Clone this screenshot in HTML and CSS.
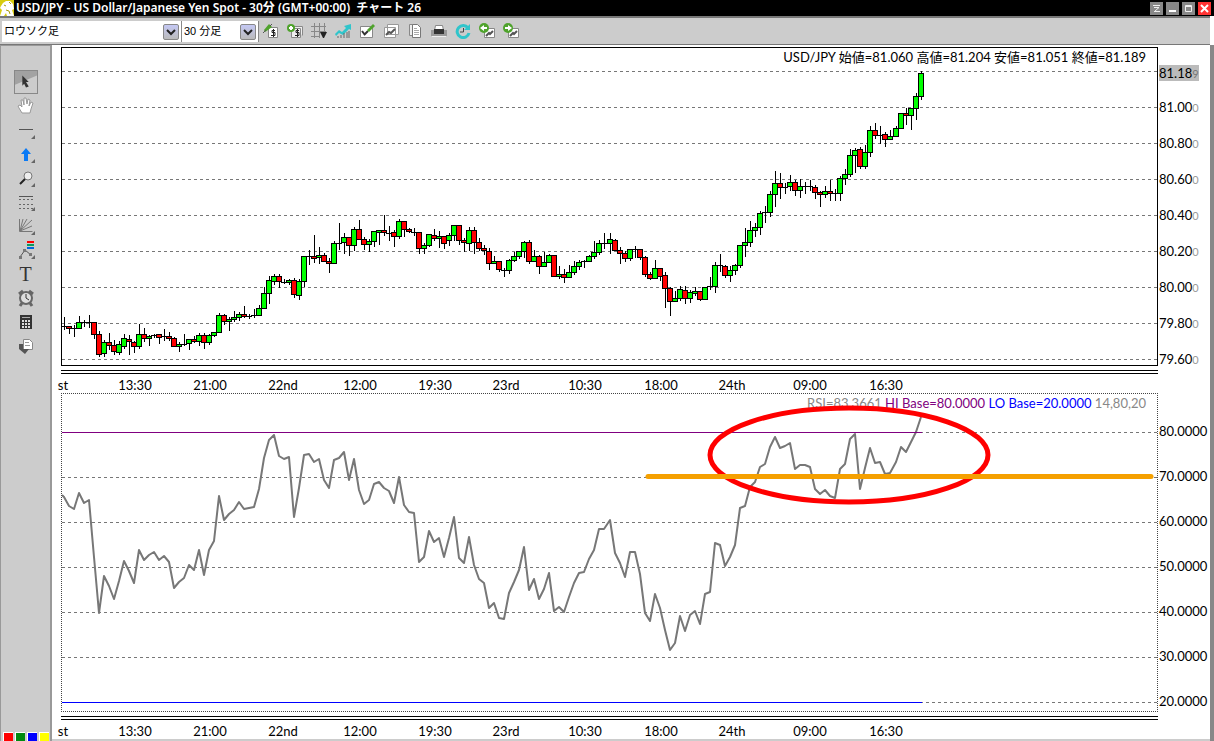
FILE: index.html
```
<!DOCTYPE html>
<html lang="ja">

<head>
    <meta charset="UTF-8">
    <meta name="viewport" content="width=device-width, initial-scale=1.0">
    <title>USD/JPY - US Dollar/Japanese Yen Spot</title>
    <link rel="stylesheet" href="styles.css">
</head>

<body>
    <header class="title-bar">
        <svg class="app-icon" width="14" height="16" viewBox="0 0 14 16">
            <path fill="#d8cc10" d="M0 0h14v16H0z"/>
            <path fill="#fff" d="M1 6l2-3 3-2 4 0 3 3 1 5-2 1 2 6H7l-1-3-2 3H0l2-6-2-2z"/>
            <path stroke="#a89c10" fill="none" d="M4 5l2 1M6 10l3 1 1 3M9 2l2 2"/>
        </svg>
        <h1>USD/JPY - US Dollar/Japanese Yen Spot - 30分 (GMT+00:00)&nbsp; チャート 26</h1>
        <div class="window-controls">
            <button aria-label="ピン"><svg width="13" height="13"><path d="M3 3.500h7M4 9.500h6M4 5.500h5L5 9" stroke="#eee" fill="none"/></svg></button>
            <button aria-label="最小化"><svg width="13" height="13"><path d="M3 8h7v2H3z" fill="#fff"/></svg></button>
            <button aria-label="最大化"><svg width="13" height="13"><path d="M3.500 3.500h6v6h-6zM3 4.500h7" stroke="#eee" fill="none"/></svg></button>
            <button class="close" aria-label="閉じる"><svg width="13" height="13"><path d="M3 3l7 7M10 3l-7 7" stroke="#fff" stroke-width="2"/></svg></button>
        </div>
    </header>

    <div class="toolbar">
        <span class="picker picker-type">
            <select aria-label="チャートの種類"><option>ロウソク足</option></select>
            <svg width="16" height="16"><path d="M3 5l4 4 4-4" stroke="#222" stroke-width="2" fill="none"/></svg>
        </span>
        <span class="picker picker-period">
            <select aria-label="足の期間"><option>30 分足</option></select>
            <svg width="16" height="16"><path d="M3 5l4 4 4-4" stroke="#222" stroke-width="2" fill="none"/></svg>
        </span>
        <div class="tools">
            <button aria-label="売買"><svg width="16" height="16"><path d="M5.500 4.500h9v10h-9z" fill="#fff" stroke="#888"/><path d="M12 7.500H9v2h3v3H8M10.500 6v8" stroke="#222" fill="none"/><path d="M1 7l5-6 3 3-4 3-3 2z" fill="#4fa32c"/><path d="M0 10l3-3M7 3l2-2" stroke="#555"/></svg></button>
            <button aria-label="注文を追加"><svg width="16" height="16"><path d="M6.500 3.500h9v9M4.500 5.500h9v9h-9z" fill="#eee" stroke="#888"/><path d="M12 7.500H9v2h3v3H8M10.500 6v8" stroke="#222" fill="none"/><circle cx="4" cy="5" r="4" fill="#4fa32c"/><path d="M2 5h4M4 3v4" stroke="#fff" stroke-width="2"/></svg></button>
            <button aria-label="グリッド"><svg width="16" height="16"><path d="M0 3.500h15M0 8.500h15M0 13.500h9M3.500 0v15M8.500 0v15M13.500 0v8" stroke="#888" fill="none"/><path d="M9 9h7l-3 6h-1z" fill="#222"/></svg></button>
            <button aria-label="指標"><svg width="16" height="16"><path d="M0 11l4-4 3 2 4-4-2-2 7-2v6l-2-1-6 6-4-2-3 3z" fill="#30c5cb"/><path d="M3 15v-2M6 15v-3M9 15v-5M12 15V9M14 15V8" stroke="#666"/></svg></button>
            <button aria-label="編集"><svg width="16" height="16"><path d="M1.500 3.500h12v11h-12z" fill="#fff" stroke="#888"/><path d="M3 8l3 4M5 12l4-4" stroke="#333" stroke-width="2"/><path d="M8 7l6-6 2 2-6 6z" fill="#4fa32c"/></svg></button>
            <button aria-label="チャートを複製"><svg width="16" height="16"><path d="M4.500 1.500h11v10h-11zM1.500 4.500h11v10h-11z" fill="#fff" stroke="#999"/><path d="M3 12l3-3 2 1 4-4" stroke="#555" stroke-width="2" fill="none"/></svg></button>
            <button aria-label="コピー"><svg width="16" height="16"><path d="M2.500 1.500h6v11h-6z" fill="#eee" stroke="#888"/><path d="M5.500 1.500h5l3 3v10h-8z" fill="#fff" stroke="#777"/><path d="M7 5.500h3M7 7.500h5M7 9.500h5M7 11.500h5" stroke="#aaa"/></svg></button>
            <button aria-label="印刷"><svg width="16" height="16"><path d="M4.500 2.500h7l1 5h-9z" fill="#fff" stroke="#888"/><path d="M0 7h16v6H0z" fill="#999"/><path d="M3 6h10v5H3z" fill="#333"/><path d="M1 13.500h14" stroke="#eee"/></svg></button>
            <button aria-label="更新"><svg width="16" height="16"><path d="M13 5a6 6 0 1 0 1 5" stroke="#30c5cb" stroke-width="3" fill="none"/><path d="M9 7l6-6v6z" fill="#30c5cb"/><path d="M8.500 5v4H5" stroke="#444" fill="none"/></svg></button>
            <button aria-label="戻る"><svg width="16" height="16"><path d="M5.500 5.500h10v9h-10z" fill="#fff" stroke="#888"/><path d="M7 13l3-3 1 1 3-3" stroke="#555" stroke-width="2" fill="none"/><circle cx="5" cy="5" r="5" fill="#4fa32c"/><path d="M1 5l4-3v2h3v2H5v2z" fill="#fff"/></svg></button>
            <button aria-label="進む"><svg width="16" height="16"><path d="M5.500 5.500h10v9h-10z" fill="#fff" stroke="#888"/><path d="M7 13l3-3 1 1 3-3" stroke="#555" stroke-width="2" fill="none"/><circle cx="5" cy="5" r="5" fill="#4fa32c"/><path d="M9 5L5 2v2H2v2h3v2z" fill="#fff"/></svg></button>
        </div>
    </div>

    <div class="workspace">
        <nav class="sidebar">
            <button class="tool selected" aria-label="選択"><svg viewBox="0 0 24 24"><path d="M0 0h24v5L0 15z" fill="#a2a2a2"/><path d="M8 5l7 7h-3l3 5-3 1-2-4-2 2z" fill="#333"/></svg></button>
            <button class="tool" aria-label="移動"><svg viewBox="0 0 24 24"><path d="M8 19l-3-5-1-2 2-1 2 2-1-7 2 0 1 5V4l2 0 1 6 1-5 2 1-1 6 2-4 2 1-2 6-1 4z" fill="#fff" stroke="#999"/></svg></button>
            <button class="tool" aria-label="直線"><svg viewBox="0 0 24 24"><path d="M5 11.500h14" stroke="#555"/><path class="more" d="M21 17v4h-4z"/></svg></button>
            <button class="tool" aria-label="矢印"><svg viewBox="0 0 24 24"><path d="M12 6l5 6h-3v7h-4v-7H7z" fill="#0a7af5"/><path class="more" d="M21 17v4h-4z"/></svg></button>
            <button class="tool" aria-label="拡大"><svg viewBox="0 0 24 24"><circle cx="14" cy="10" r="4" fill="#eee" stroke="#777"/><path d="M11 13l-5 5" stroke="#222" stroke-width="2"/><path class="more" d="M21 17v4h-4z"/></svg></button>
            <button class="tool" aria-label="リトレースメント"><svg viewBox="0 0 24 24"><path d="M5 6.500h14" stroke="#555"/><path d="M5 9.500h14M5 14.500h14M5 18.500h14" stroke="#666" stroke-dasharray="2 2"/><path class="more" d="M21 17v4h-4z"/></svg></button>
            <button class="tool" aria-label="ファン"><svg viewBox="0 0 24 24"><path d="M5.500 5v12.500h13M6 17L9 5M6 17l7-12M6 17L18 6M6 17l12-5" stroke="#777" fill="none"/><path class="more" d="M21 17v4h-4z"/></svg></button>
            <button class="tool" aria-label="波動"><svg viewBox="0 0 24 24"><path d="M6 19l5-7 6 5" stroke="#555" fill="none"/><path d="M5 18h3v3H5zM9 11h3v3H9zM15 15h3v3h-3z" fill="#777"/><path d="M13 4h7" stroke="#f00" stroke-width="2"/><path d="M13 7h7" stroke="#0a9a5a" stroke-width="2"/><path d="M13 10h7" stroke="#06d" stroke-width="2"/><path class="more" d="M21 17v4h-4z"/></svg></button>
            <button class="tool tool-text" aria-label="文字">T</button>
            <button class="tool" aria-label="アラーム"><svg viewBox="0 0 24 24"><path d="M5 8l4-3M19 8l-4-3M8 17l-2 3M16 17l2 3" stroke="#666" stroke-width="3"/><circle cx="12" cy="12" r="6" fill="#ddd" stroke="#666" stroke-width="2"/><path d="M12 8v4l3 2" stroke="#333" fill="none"/></svg></button>
            <button class="tool" aria-label="電卓"><svg viewBox="0 0 24 24"><path d="M6 5h12v14H6z" fill="#333"/><path d="M8 7.500h8" stroke="#aaa"/><path d="M8 11h8M8 14h8M8 17h8" stroke="#ddd" stroke-width="2" stroke-dasharray="2 1"/></svg></button>
            <button class="tool" aria-label="ページ"><svg viewBox="0 0 24 24"><path d="M9.500 5.500h6l3 3v7h-9z" fill="#fff" stroke="#888"/><path d="M11 8.500h4M11 11.500h5" stroke="#999"/><path d="M5 10h4v5h6l-4 5-6-5z" fill="#555"/></svg></button>
            <div class="swatches">
                <button class="swatch red" aria-label="赤"></button>
                <button class="swatch green" aria-label="緑"></button>
                <button class="swatch blue" aria-label="青"></button>
                <button class="swatch yellow" aria-label="黄"></button>
            </div>
        </nav>

        <main class="charts">
            <section class="panel">
                <div class="plot price-plot">
                    <p class="legend">USD/JPY 始値=81.060 高値=81.204 安値=81.051 終値=81.189</p>
                    <svg id="priceSvg"></svg>
                </div>
                <div class="scale price-scale">
                    <p class="current">81.18<small>9</small></p>
                    <ul>
                        <li>81.00<small>0</small></li>
                        <li>80.80<small>0</small></li>
                        <li>80.60<small>0</small></li>
                        <li>80.40<small>0</small></li>
                        <li>80.20<small>0</small></li>
                        <li>80.00<small>0</small></li>
                        <li>79.80<small>0</small></li>
                        <li>79.60<small>0</small></li>
                    </ul>
                </div>
                <svg class="time-axis"></svg>
            </section>
            <section class="panel">
                <div class="plot rsi-plot">
                    <p class="legend"><span class="rsi">RSI=83.3661</span> <span class="hi">HI Base=80.0000</span> <span class="lo">LO Base=20.0000</span> <span class="params">14,80,20</span></p>
                    <svg id="rsiSvg"></svg>
                </div>
                <div class="scale rsi-scale">
                    <ul>
                        <li>80.0000</li>
                        <li>70.0000</li>
                        <li>60.0000</li>
                        <li>50.0000</li>
                        <li>40.0000</li>
                        <li>30.0000</li>
                        <li>20.0000</li>
                    </ul>
                </div>
                <svg class="time-axis"></svg>
            </section>
        </main>
    </div>

    <script src="chart.js"></script>
</body>

</html>
```
FILE: styles.css
```
:root {
    --chrome: #cccccc;
    --edge: #777777;
    --grid: #777777;
    --buy: #00ff00;
    --sell: #ff0000;
}

* {
    box-sizing: border-box;
    margin: 0;
    padding: 0;
}

body {
    font-family: Lato, "Noto Sans CJK JP", sans-serif;
    font-size: 13px;
    color: #000;
    background: #fff;
    display: flex;
    flex-direction: column;
    height: 100vh;
    overflow: hidden;
}

button {
    border: none;
    background: none;
    display: flex;
    align-items: center;
    justify-content: center;
}

svg {
    display: block;
}

ul {
    list-style: none;
}

.title-bar {
    display: flex;
    align-items: center;
    gap: 2px;
    height: 16px;
    padding-right: 3px;
    background: #000;
    color: #fff;
}

.title-bar h1 {
    flex: 1;
    font-family: "Noto Sans", "Noto Sans CJK JP", sans-serif;
    font-size: 12px;
    line-height: 16px;
    font-weight: 600;
    white-space: nowrap;
}

.window-controls {
    display: flex;
    gap: 3px;
}

.window-controls button {
    width: 13px;
    height: 13px;
    background: #888;
}

.window-controls .close {
    background: #f33;
}

.toolbar {
    display: flex;
    align-items: center;
    height: 29px;
    margin-right: 4px;
    padding-left: 2px;
    background: var(--chrome);
    border-top: 2px solid var(--edge);
    border-bottom: 1px solid var(--edge);
}

.picker {
    position: relative;
    height: 21px;
    border-right: 1px solid #888;
}

.picker-type {
    width: 180px;
}

.picker-period {
    width: 77px;
}

.picker select {
    appearance: none;
    width: 100%;
    height: 21px;
    padding: 0 20px 0 2px;
    border: none;
    background: #fff;
    color: #000;
    font-family: "Liberation Sans", "Noto Sans CJK JP", sans-serif;
    font-size: 11px;
}

.picker svg {
    position: absolute;
    top: 3px;
    right: 2px;
    background: linear-gradient(#c4c8f4, #bbb);
    border: 1px solid #888;
    border-radius: 2px;
    pointer-events: none;
}

.tools {
    display: flex;
}

.tools button {
    width: 24px;
    height: 24px;
}

.workspace {
    flex: 1;
    display: flex;
    min-height: 0;
    border-right: 4px solid #888;
}

.sidebar {
    width: 52px;
    padding-top: 24px;
    display: flex;
    flex-direction: column;
    align-items: center;
    background: var(--chrome);
    border-left: 1px solid #999;
    border-right: 2px solid #999;
    border-top: 1px solid #999;
}

.tool {
    width: 24px;
    height: 24px;
    flex: none;
}

.tool svg {
    width: 24px;
    height: 24px;
}

.tool.selected {
    border: 1px solid #888;
}

.tool .more {
    fill: #666;
}

.tool-text {
    font-family: "Liberation Serif", serif;
    font-size: 20px;
    color: #333;
}

.swatches {
    display: flex;
    gap: 2px;
    margin-top: auto;
}

.swatch {
    width: 10px;
    height: 9px;
    border-left: 1px solid #fff;
    border-top: 1px solid #fff;
}

.red {
    background: #f00;
}

.green {
    background: #008a10;
}

.blue {
    background: #00f;
}

.yellow {
    background: #ff0;
}

.charts {
    flex: 1;
    min-width: 0;
    padding: 2px 0 0 9px;
    border-bottom: 2px solid var(--chrome);
}

.panel {
    display: grid;
    grid-template-columns: 1fr 52px;
}

.plot {
    position: relative;
    height: 319px;
}

.price-plot {
    border: 1px solid #000;
}

.rsi-plot {
    border: 1px dotted #444;
}

.plot svg {
    position: relative;
    width: 100%;
    height: 100%;
}

.legend {
    position: absolute;
    top: 1px;
    right: 11px;
    line-height: 16px;
    white-space: nowrap;
}

.legend .rsi,
.legend .params {
    color: #888;
}

.legend .hi {
    color: #800080;
}

.legend .lo {
    color: #00f;
}

.scale {
    position: relative;
    height: 319px;
    padding-left: 1px;
}

.price-scale ul {
    padding-top: 42px;
}

.price-scale li {
    height: 36px;
    line-height: 36px;
}

.price-scale li:last-child {
    height: 25px;
}

.price-scale small {
    color: #999;
    font-size: 11px;
}

.price-scale .current {
    position: absolute;
    top: 18px;
    height: 16px;
    line-height: 16px;
    background: #bbb;
}

.price-scale .current small {
    color: #777;
}

.rsi-scale ul {
    padding-top: 16px;
}

.rsi-scale li {
    height: 45px;
    line-height: 45px;
}

.rsi-scale li:last-child {
    height: 33px;
}

.time-axis {
    width: 100%;
    height: 27px;
    overflow: visible;
}

.time-axis text {
    text-anchor: middle;
}

.axis-line {
    stroke: #000;
}

.grid-line {
    stroke: var(--grid);
    stroke-dasharray: 3 3;
}

.wick,
.candle {
    stroke: #000;
}

.candle.up {
    fill: var(--buy);
}

.candle.down {
    fill: var(--sell);
}

.rsi-line {
    fill: none;
    stroke: #777;
    stroke-width: 2;
    stroke-linejoin: round;
}

.hi-line {
    fill: #800080;
}

.lo-line {
    fill: #00f;
}

.marker-line {
    stroke: #f5a000;
    stroke-width: 5;
    stroke-linecap: round;
}

.marker-ellipse {
    fill: none;
    stroke: #f00;
    stroke-width: 5;
}
```
FILE: chart.js
```
const NS = 'http://www.w3.org/2000/svg';

// body top, body bottom, wick top, wick bottom, direction (1 up, 0 down)
const candles = [
    [326,326,317,329,1],[326,328,326,333,0],[328,328,325,336,1],[322,328,316,328,1],[322,322,320,326,1],
    [322,322,315,327,1],[322,334,322,338,0],[334,354,331,356,0],[342,353,340,356,1],[342,345,333,349,0],
    [345,351,340,354,0],[344,352,341,354,1],[338,346,334,348,1],[339,341,335,354,0],[342,346,341,352,0],
    [334,346,324,348,1],[334,338,328,341,0],[336,338,335,345,1],[335,335,334,337,1],[334,337,334,343,0],
    [336,336,329,340,1],[336,338,332,340,0],[338,346,337,346,0],[344,346,342,351,1],[344,344,334,345,1],
    [339,343,339,349,1],[339,341,336,342,0],[335,341,333,345,1],[335,342,333,348,0],[335,342,334,344,1],
    [332,335,332,336,1],[315,332,313,332,1],[315,321,314,324,0],[319,321,317,330,1],[317,319,311,321,1],
    [314,317,312,320,1],[314,316,306,317,0],[316,316,314,318,1],[315,315,309,317,1],[308,315,305,315,1],
    [293,308,287,308,1],[280,293,276,303,1],[276,281,274,284,1],[276,281,274,287,0],[282,282,279,283,1],
    [280,282,279,284,1],[280,294,278,297,0],[281,295,279,299,1],[256,281,256,286,1],[256,256,250,264,1],
    [256,258,235,262,0],[255,257,247,263,1],[255,261,253,261,0],[261,263,258,272,0],[243,263,241,263,1],
    [243,243,223,249,1],[237,242,233,253,1],[237,245,237,255,0],[229,245,227,250,1],[229,239,220,239,0],
    [239,244,237,249,0],[241,244,239,251,1],[231,241,231,246,1],[230,232,230,244,1],[230,232,215,235,0],
    [233,233,226,240,1],[232,236,230,246,0],[221,236,219,238,1],[221,229,221,236,0],[229,231,228,232,0],
    [232,232,228,235,1],[232,248,232,253,0],[245,248,243,253,1],[234,245,234,246,1],[235,238,229,240,0],
    [236,238,231,247,1],[236,243,236,248,0],[235,240,233,245,1],[225,235,225,240,1],[225,240,225,244,0],
    [240,242,238,251,0],[230,243,227,250,1],[230,242,227,253,0],[242,248,238,250,0],[248,250,245,254,0],
    [251,263,248,269,0],[261,263,256,263,1],[261,269,261,271,0],[270,270,268,276,1],[260,270,259,273,1],
    [256,260,252,261,1],[251,256,251,258,1],[242,251,241,257,1],[242,261,240,263,0],[256,261,250,261,1],
    [256,266,255,273,0],[262,266,252,266,1],[255,262,254,262,1],[255,276,255,276,0],[274,276,266,278,1],
    [274,277,269,282,0],[272,277,265,277,1],[266,272,261,274,1],[262,266,260,269,1],[261,261,260,267,1],
    [256,261,255,261,1],[252,256,241,258,1],[243,252,240,254,1],[243,243,233,248,1],[239,243,233,253,1],
    [240,250,239,250,0],[250,253,247,263,0],[253,258,251,261,0],[249,258,249,260,1],[249,249,246,257,1],
    [249,257,249,259,0],[257,274,256,276,0],[274,278,272,279,0],[268,278,260,278,1],[268,276,268,280,0],
    [275,288,272,307,0],[288,301,287,315,0],[298,301,291,301,1],[289,298,286,300,1],[290,298,286,303,0],
    [292,298,290,302,1],[291,293,287,295,1],[291,299,291,300,0],[287,299,287,299,1],[286,286,277,289,1],
    [265,286,262,292,1],[265,265,254,271,1],[266,275,265,277,0],[270,275,266,281,1],[265,270,264,274,1],
    [245,265,245,267,1],[242,245,228,256,1],[230,242,221,246,1],[227,230,223,236,1],[213,227,211,234,1],
    [212,212,206,222,1],[194,212,191,216,1],[183,194,171,206,1],[183,187,173,198,0],[187,187,183,193,1],
    [182,186,175,190,1],[182,190,180,195,0],[186,190,179,197,1],[186,186,182,193,1],[186,186,180,190,1],
    [187,192,185,198,0],[192,194,191,206,0],[191,194,186,197,1],[191,193,180,200,0],[193,193,189,200,1],
    [178,193,176,200,1],[174,178,169,184,1],[155,174,149,176,1],[150,155,148,172,1],[149,166,147,168,0],
    [152,166,145,168,1],[130,152,126,156,1],[130,135,123,138,0],[135,135,126,143,1],[134,139,132,146,0],
    [136,139,130,139,1],[128,136,126,136,1],[113,128,113,128,1],[113,115,108,124,0],[108,115,108,129,1],
    [96,108,93,119,1],[73,96,71,99,1]
];

// RSI samples, three steps per pixel from the panel top
const rsi = [
    320,349,357,308,338,330,500,668,558,588,628,573,513,543,578,480,509,495,487,509,
    498,516,594,577,565,524,541,479,555,480,453,317,389,372,361,335,358,355,350,298,
    205,150,134,197,206,202,382,295,195,191,217,207,270,294,210,203,185,270,206,300,
    341,331,283,276,295,303,338,261,345,365,369,516,500,422,456,444,501,445,381,505,
    519,440,525,567,578,654,638,683,687,610,577,540,470,600,566,627,598,548,664,651,
    667,620,578,550,546,506,480,417,417,390,490,520,560,487,485,552,670,694,611,655,
    720,781,758,678,723,675,663,702,611,606,460,466,528,500,465,355,347,292,275,230,
    222,172,142,174,168,160,236,225,225,230,297,312,300,319,325,236,222,146,131,298,
    235,174,218,215,252,248,215,170,186,155,125,80
];

const times = [
    [2, 'st'], [74, '13:30'], [149, '21:00'], [222, '22nd'], [299, '12:00'], [374, '19:30'],
    [445, '23rd'], [524, '10:30'], [600, '18:00'], [671, '24th'], [749, '09:00'], [825, '16:30']
];

function add(parent, name, attrs) {
    const el = document.createElementNS(NS, name);
    for (const key in attrs) el.setAttribute(key, attrs[key]);
    parent.appendChild(el);
    return el;
}

function hline(parent, cls, y, x1, x2) {
    add(parent, 'line', { class: cls, x1: x1, x2: x2, y1: y + 0.5, y2: y + 0.5 });
}

function barX(i) {
    return 2 + i * 5 + (i >= 109 ? 1 : 0) + (i >= 166 ? 1 : 0);
}

// Price panel
const price = document.getElementById('priceSvg');
for (let y = 23; y < 317; y += 36) hline(price, 'grid-line', y, 0, '100%');

const TOP = 48;
candles.forEach(([top, bottom, high, low, up], i) => {
    const x = barX(i);
    add(price, 'line', { class: 'wick', x1: x + 0.5, x2: x + 0.5, y1: high - TOP, y2: low - TOP + 1 });
    if (top === bottom) {
        hline(price, 'wick', top - TOP, x - 3, x + 3);
    } else {
        add(price, 'rect', {
            class: up ? 'candle up' : 'candle down',
            x: x - 2.5, y: top - TOP + 0.5, width: 5, height: bottom - top
        });
    }
});

// RSI panel
const panel = document.getElementById('rsiSvg');
for (let y = 38; y < 317; y += 45) hline(panel, 'grid-line', y, 0, '100%');

const points = rsi.map((v, i) => `${barX(i)},${Math.round(v / 3) - 4}`);
add(panel, 'polyline', { class: 'rsi-line', points: '0,101 ' + points.join(' ') });
add(panel, 'rect', { class: 'hi-line', x: 0, y: 38, width: 860, height: 1 });
add(panel, 'rect', { class: 'lo-line', x: 0, y: 308, width: 860, height: 1 });
add(panel, 'ellipse', { class: 'marker-ellipse', cx: 787, cy: 61, rx: 139, ry: 47 });
hline(panel, 'marker-line', 82, 586, 1089);

// Time axes
document.querySelectorAll('.time-axis').forEach(axis => {
    hline(axis, 'axis-line', 4, 0, '100%');
    hline(axis, 'axis-line', 7, 0, '100%');
    times.forEach(([x, label]) => {
        add(axis, 'text', { x: x, y: 24 }).textContent = label;
    });
});
```
